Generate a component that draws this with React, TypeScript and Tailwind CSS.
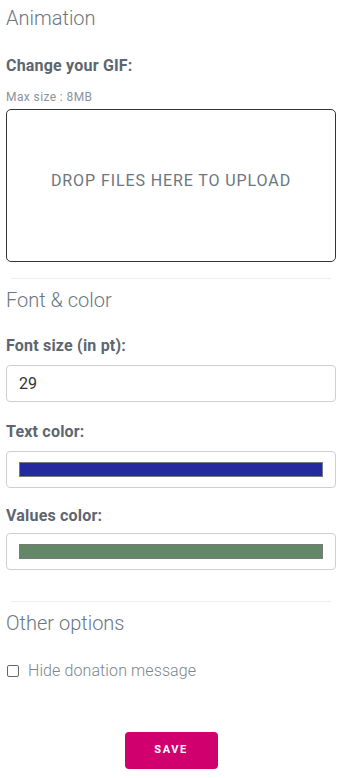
import { useState } from "react";

function ColorField({ color }: { color: string }) {
  return (
    <div className="h-[37px] border border-[#cfcfcf] rounded-[4px] px-[12px] py-[10px] bg-white">
      <div className="h-[15px] border border-[#7a7a7a]" style={{ backgroundColor: color }} />
    </div>
  );
}

export default function App() {
  const [fontSize, setFontSize] = useState("29");
  const [hideDonation, setHideDonation] = useState(false);

  return (
    <div className="min-h-screen bg-white px-[6px] font-['Roboto',sans-serif]">
      <h2 className="pt-[6px] text-[20px] leading-[24px] font-light text-[#6c7680]">Animation</h2>

      <div className="mt-[26px] text-[16px] leading-[20px] tracking-[0.2px] font-bold text-[#5c6670]">Change your GIF:</div>
      <div className="mt-[14px] text-[12px] leading-[14px] tracking-[0.4px] text-[#8a939b]">Max size : 8MB</div>
      <div className="mt-[5px] h-[153px] border border-[#333] rounded-[5px] flex items-center justify-center pb-[10px]">
        <span className="text-[16px] tracking-[0.9px] text-[#6c7680]">DROP FILES HERE TO UPLOAD</span>
      </div>

      <div className="px-[5px] mt-[16px]">
        <div className="h-px bg-[#eeeeee]" />
      </div>

      <h2 className="mt-[9px] text-[20px] leading-[24px] font-light text-[#6c7680]">Font &amp; color</h2>

      <div className="mt-[24px] text-[16px] leading-[20px] tracking-[0.2px] font-bold text-[#5c6670]">Font size (in pt):</div>
      <input
        value={fontSize}
        onChange={(e) => setFontSize(e.target.value)}
        className="mt-[9px] block w-full h-[37px] border border-[#cfcfcf] rounded-[4px] px-[12px] text-[16px] text-[#333] outline-none"
      />

      <div className="mt-[20px] text-[16px] leading-[20px] tracking-[0.2px] font-bold text-[#5c6670]">Text color:</div>
      <div className="mt-[9px]">
        <ColorField color="#222a9e" />
      </div>

      <div className="mt-[18px] text-[16px] leading-[20px] tracking-[0.2px] font-bold text-[#5c6670]">Values color:</div>
      <div className="mt-[7px]">
        <ColorField color="#638868" />
      </div>

      <div className="px-[5px] mt-[31px]">
        <div className="h-px bg-[#eeeeee]" />
      </div>

      <h2 className="mt-[9px] text-[20px] leading-[24px] font-light text-[#6c7680]">Other options</h2>

      <label className="mt-[24px] flex items-center gap-[9px] text-[16px] leading-[24px] tracking-[0.1px] font-light text-[#7b858e]">
        <input
          type="checkbox"
          checked={hideDonation}
          onChange={(e) => setHideDonation(e.target.checked)}
          className="ml-px appearance-none w-[12px] h-[12px] border border-[#666] rounded-[2px] bg-white checked:bg-[#d1006f]"
        />
        Hide donation message
      </label>

      <div className="mt-[49px] flex justify-center">
        <button className="w-[93px] h-[37px] bg-[#d1006f] rounded-[4px] text-white text-[11px] font-bold tracking-[0.14em]">
          SAVE
        </button>
      </div>
    </div>
  );
}
